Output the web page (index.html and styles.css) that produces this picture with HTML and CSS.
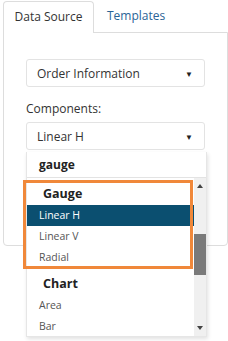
FILE: index.html
```html
<!DOCTYPE html>
<html lang="en">
<head>
    <meta charset="UTF-8">
    <title>Data Source</title>
    <link rel="stylesheet" href="styles.css">
</head>
<body>
    <div class="tabs">
        <div class="tab active">Data Source</div>
        <div class="tab">Templates</div>
    </div>

    <div class="panel">
        <div class="select first">
            <span>Order Information</span>
            <span class="caret">&#9660;</span>
        </div>
        <label class="label">Components:</label>
        <div class="select">
            <span>Linear H</span>
            <span class="caret">&#9660;</span>
        </div>

        <!-- open dropdown -->
        <div class="dropdown">
            <div class="search">gauge</div>
            <div class="list-wrap">
                <ul class="list">
                    <li class="group">Gauge</li>
                    <li class="item selected">Linear H</li>
                    <li class="item">Linear V</li>
                    <li class="item">Radial</li>
                    <li class="group">Chart</li>
                    <li class="item">Area</li>
                    <li class="item">Bar</li>
                </ul>
                <div class="scrollbar">
                    <span class="arrow up"></span>
                    <span class="thumb"></span>
                    <span class="arrow down"></span>
                </div>
            </div>
            <div class="highlight"></div>
        </div>
    </div>
</body>
</html>
```

FILE: styles.css
```css
html, body {
    min-height: 341px;
}

body {
    margin: 0;
    font-family: "Open Sans", "Noto Sans", sans-serif;
    background-color: #fff;
    color: #333;
}

.tabs {
    display: flex;
    padding: 1px 0 0 3px;
    height: 31px;
}

.tab {
    font-size: 12px;
    line-height: 30px;
    padding: 0 12px 0 13px;
    color: #2a6496;
    white-space: nowrap;
}

.tab.active {
    width: 91px;
    box-sizing: border-box;
    padding: 0;
    text-align: center;
    color: #333;
    border: 1px solid #ddd;
    border-bottom: none;
    border-radius: 4px 4px 0 0;
    background-color: #fff;
    position: relative;
    z-index: 1;
    height: 32px;
}

.panel {
    position: relative;
    margin-left: 3px;
    height: 214px;
    border: 1px solid #ddd;
    border-radius: 0 0 4px 4px;
    padding: 26px 0 0 22px;
    box-sizing: border-box;
}

.select {
    width: 179px;
    height: 28px;
    box-sizing: border-box;
    border: 1px solid #e3e3e3;
    border-radius: 3px;
    display: flex;
    align-items: center;
    justify-content: space-between;
    padding: 0 11px 0 10px;
    font-size: 12px;
    color: #333;
}

.caret {
    font-size: 8px;
    color: #222;
}

.label {
    display: block;
    font-size: 12px;
    margin: 13px 0 5px 0;
    line-height: 17px;
}

.dropdown {
    position: absolute;
    left: 22px;
    top: 119px;
    width: 179px;
    background-color: #fff;
    border: 1px solid #e6e6e6;
    border-top: none;
    box-shadow: 1px 2px 4px rgba(0, 0, 0, 0.12);
    z-index: 2;
}

.search {
    height: 26px;
    line-height: 25px;
    box-sizing: border-box;
    border-bottom: 1px solid #e3e3e3;
    padding-left: 12px;
    font-size: 12px;
    font-weight: bold;
    color: #222;
}

.list-wrap {
    display: flex;
    height: 158px;
    overflow: hidden;
}

.list {
    list-style: none;
    margin: 0;
    padding: 0;
    flex: 1;
}

.group {
    height: 27px;
    line-height: 31px;
    padding-left: 16px;
    font-size: 12.5px;
    font-weight: bold;
    color: #222;
}

.item {
    height: 21px;
    line-height: 21px;
    padding-left: 12px;
    font-size: 10.5px;
    color: #555;
}

.item.selected {
    background-color: #0b4f70;
    color: #fff;
}

.scrollbar {
    width: 12px;
    background-color: #f0f0f0;
    position: relative;
}

.thumb {
    position: absolute;
    left: 0;
    top: 56px;
    width: 12px;
    height: 41px;
    background-color: #7a7a7a;
}

.arrow {
    position: absolute;
    left: 3px;
    width: 0;
    height: 0;
    border-left: 3px solid transparent;
    border-right: 3px solid transparent;
}

.arrow.up {
    top: 6px;
    border-bottom: 4px solid #444;
}

.arrow.down {
    bottom: 6px;
    border-top: 4px solid #444;
}

.highlight {
    position: absolute;
    left: -4px;
    top: 28px;
    width: 164px;
    height: 83px;
    border: 3px solid #f0883a;
    pointer-events: none;
}
```
